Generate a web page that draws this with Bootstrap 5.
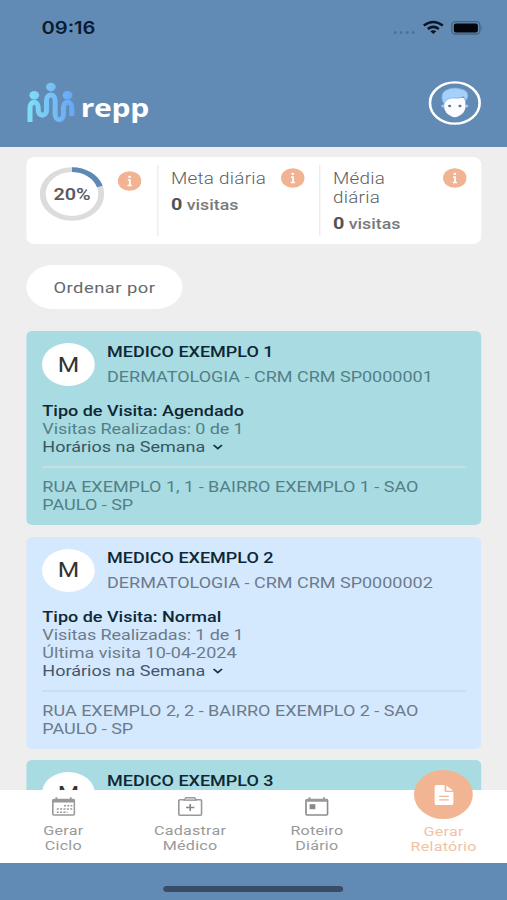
<!DOCTYPE html>
<html lang="pt-BR">
<head>
<meta charset="utf-8">
<meta name="viewport" content="width=device-width, initial-scale=1">
<title>repp</title>
<link href="https://cdn.jsdelivr.net/npm/bootstrap@5.3.0/dist/css/bootstrap.min.css" rel="stylesheet">
<style>
body{margin:0;overflow:hidden;background:#618bb5}
/* The app is laid out 422.5px wide and stretched horizontally to the window */
.app{width:422.5px;height:900px;transform:scaleX(1.2);transform-origin:0 0;font-family:Roboto,"Liberation Sans",sans-serif;font-size:15px;line-height:18px;background:#eee;color:#66696c}
svg{display:block;flex:none}
.top-area{height:147px;background:#618bb5}
.status{height:54px;padding:1px 20.8px 0 34.6px}
.clock{font:600 16.8px/20px Inter,sans-serif;color:#0b1a30}
.brand-row{padding:27px 21.7px 0 21.2px}
.brand-name{font:700 25px/28px "Open Sans",sans-serif;color:#fff;margin-left:4px;padding-top:8px;letter-spacing:-.2px}
.feed{height:643px;padding:10px 21.7px 0 22.3px;overflow:hidden}
.stats{height:87px;border-radius:7px}
.gauge-cell{width:108.5px;padding:10px 12.8px 12px 11px}
.stat-in{border-left:1px solid #e9e9e9;padding:0 11.8px 0 10.7px}
.meta-cell{width:135px}
.stat-label{font-weight:300;font-size:15.7px;line-height:19px;letter-spacing:.22px;color:#5c5f62}
.stat-val{font-size:14.8px;font-weight:500;color:#77797b}
.stat-val b{font-size:16.5px;color:#505356}
.pct{font-size:16.8px}
.info{margin-top:2.5px}
.order{height:44px;width:129.5px;margin:21px 0 22px;padding:2px 0 0;background:#fff;color:#66696c;font-size:15.3px;letter-spacing:.4px}
.doc{border-radius:5px;padding:12px 12.7px 11px 13px;margin-bottom:11.5px}
.teal{background:#a9dbe3;--soft:#537f87;--mid:#35565f;--line:#c4dfe3}
.sky{background:#d5e9fe;--soft:#6c7b8b;--mid:#46566a;--line:#cbdeee}
.avatar{width:43.5px;height:43px;font-size:20.5px;color:#333}
.who{padding-left:10.4px}
.chev{margin-left:6px}
.strong-t{font-weight:500;color:#0d2834}
.soft{color:var(--soft)}
.mid{color:var(--mid)}
.visits{letter-spacing:-.08px}
.rule{height:2px;background:var(--line);margin:10px 0}
.tabs{height:73px;font-size:13.4px;line-height:15px;color:#999;letter-spacing:.2px}
.tab{width:25%}
.tab-icon{margin:7px 0 6.5px}
.peach{color:#f0c3a5}
.fab{width:49px;height:49px;background:#f2b593;margin:-20px 0 4.5px}
.bottom-area{height:37px;background:#618bb5;padding-top:14px}
.home-bar{width:150px;height:6px;background:#3a4b65}
</style>
<script src="https://cdn.jsdelivr.net/npm/bootstrap@5.3.0/dist/js/bootstrap.bundle.min.js"></script>
</head>
<body>
<div class="app d-flex flex-column">
  <header class="top-area flex-shrink-0">
    <div class="status d-flex align-items-center justify-content-between">
      <span class="clock">09:16</span>
      <svg width="76" height="20" viewBox="0 0 91 20" preserveAspectRatio="none">
        <g fill="#4b719b"><circle cx="4" cy="14.500" r="1.500"/><circle cx="10" cy="14.500" r="1.500"/><circle cx="16" cy="14.500" r="1.500"/><circle cx="22" cy="14.500" r="1.500"/></g>
        <g fill="none" stroke="#0a1626" stroke-width="2.600"><path d="M32.500 7.500Q42 0.500 51.500 7.500"/><path d="M36.500 11Q42 6.800 47.500 11"/></g>
        <path d="M39 13.200Q42 11.200 45 13.200L42 16Z" fill="#0a1626"/>
        <rect x="60.500" y="3.700" width="28" height="12.300" rx="3.500" fill="none" stroke="#48627f" stroke-width="1.300"/>
        <rect x="62.500" y="5.400" width="24" height="9" rx="2" fill="#020509"/>
        <path d="M90 8v4q1-.5 1-2t-1-2Z" fill="#48627f"/>
      </svg>
    </div>
    <div class="brand-row d-flex align-items-center justify-content-between">
      <div class="d-flex align-items-center">
        <svg width="42" height="44" viewBox="0 0 50 44" preserveAspectRatio="none">
          <defs><linearGradient id="lg" gradientUnits="userSpaceOnUse" x1="2" y1="0" x2="48" y2="0"><stop offset="0" stop-color="#7fe0f5"/><stop offset=".5" stop-color="#77c2f5"/><stop offset="1" stop-color="#67a6f5"/></linearGradient></defs>
          <g fill="url(#lg)"><ellipse cx="9" cy="14.300" rx="4.800" ry="4.200"/><ellipse cx="25.500" cy="6" rx="4.800" ry="4.200"/><ellipse cx="42" cy="14.300" rx="4.800" ry="4.200"/></g>
          <path d="M4.800 41V26.500C4.800 19.500 12.900 19.500 12.900 26.500V29C12.900 36 21.200 36 21.200 29V19.500C21.200 12 29.700 12 29.700 19.500V33C29.700 40.500 38 40.500 38 33V26.500C38 19.500 46.300 19.500 46.300 26.500V35" fill="none" stroke="url(#lg)" stroke-width="5"/>
        </svg>
        <span class="brand-name">repp</span>
      </div>
      <svg width="44" height="44" viewBox="0 0 44 44">
        <circle cx="22" cy="22" r="20.700" fill="none" stroke="#fff" stroke-width="2.200"/>
        <circle cx="12.300" cy="25" r="1.600" fill="#9dcaf5"/><circle cx="31.700" cy="25" r="1.600" fill="#9dcaf5"/>
        <path d="M13.200 17h17.600v10q-.5 5-5.800 8.300q-3 1.700-6 0q-5.300-3.300-5.800-8.300Z" fill="#fafcff"/>
        <path d="M12.300 21.500Q9.500 13 14 9.700Q20 5.500 27 8Q33.500 9.500 32.800 15.500Q32.500 18.500 30.500 19.500L29.500 15.500Q26 18 21 17Q15.500 16.700 13.600 21.500Z" fill="#a5d0fa" stroke="#80b2e5" stroke-width=".7"/>
        <circle cx="17.700" cy="25" r="1.300" fill="#667585"/><circle cx="26.300" cy="25" r="1.300" fill="#667585"/>
      </svg>
    </div>
  </header>

  <main class="feed flex-shrink-0">
    <section class="stats bg-white d-flex">
      <div class="gauge-cell d-flex justify-content-between">
        <svg width="54" height="54" viewBox="0 0 55 55">
          <circle cx="27.500" cy="27.500" r="24.800" fill="none" stroke="#dcdcdc" stroke-width="5"/>
          <path d="M27.500 2.700A24.800 24.800 0 0 1 51.100 19.900" fill="none" stroke="#5c89b5" stroke-width="5"/>
          <text class="pct" x="27.500" y="33.500" text-anchor="middle" font-weight="600" fill="#5a5c5f">20%</text>
        </svg>
        <svg class="info mt-1" width="20" height="20" viewBox="0 0 20 20"><circle cx="10" cy="10" r="9.800" fill="#f1b391"/><path d="M8.500 9h1.700v5.200M8.300 14.400h3.600" stroke="#fff" stroke-width="1.500" fill="none"/><circle cx="10" cy="5.900" r="1.150" fill="#fff"/></svg>
      </div>
      <div class="meta-cell d-flex">
        <div class="stat-in flex-fill d-flex justify-content-between my-2">
          <div><div class="stat-label mt-1">Meta diária</div><div class="stat-val mt-2"><b>0</b> visitas</div></div>
          <svg class="info" width="20" height="20" viewBox="0 0 20 20"><circle cx="10" cy="10" r="9.800" fill="#f1b391"/><path d="M8.500 9h1.700v5.200M8.300 14.400h3.600" stroke="#fff" stroke-width="1.500" fill="none"/><circle cx="10" cy="5.900" r="1.150" fill="#fff"/></svg>
        </div>
      </div>
      <div class="d-flex flex-fill">
        <div class="stat-in flex-fill d-flex justify-content-between my-2">
          <div><div class="stat-label mt-1">Média<br>diária</div><div class="stat-val mt-2"><b>0</b> visitas</div></div>
          <svg class="info" width="20" height="20" viewBox="0 0 20 20"><circle cx="10" cy="10" r="9.800" fill="#f1b391"/><path d="M8.500 9h1.700v5.200M8.300 14.400h3.600" stroke="#fff" stroke-width="1.500" fill="none"/><circle cx="10" cy="5.900" r="1.150" fill="#fff"/></svg>
        </div>
      </div>
    </section>

    <button class="order btn rounded-pill border-0 d-block">Ordenar por</button>

    <article class="doc teal">
      <div class="d-flex">
        <div class="avatar bg-white rounded-circle d-flex align-items-center justify-content-center flex-shrink-0">M</div>
        <div class="who d-flex flex-column justify-content-between"><div class="strong-t">MEDICO EXEMPLO 1</div><div class="soft">DERMATOLOGIA - CRM CRM SP0000001</div></div>
      </div>
      <div class="mt-3 strong-t">Tipo de Visita: Agendado</div>
      <div class="soft visits">Visitas Realizadas: 0 de 1</div>
      <div class="mid d-flex align-items-center">Horários na Semana <svg class="chev" width="9" height="6" viewBox="0 0 9 6"><path d="M1 1l3.500 3.500L8 1" fill="none" stroke="#173540" stroke-width="1.600"/></svg></div>
      <div class="rule"></div>
      <div class="soft">RUA EXEMPLO 1, 1 - BAIRRO EXEMPLO 1 - SAO<br>PAULO - SP</div>
    </article>

    <article class="doc sky">
      <div class="d-flex">
        <div class="avatar bg-white rounded-circle d-flex align-items-center justify-content-center flex-shrink-0">M</div>
        <div class="who d-flex flex-column justify-content-between"><div class="strong-t">MEDICO EXEMPLO 2</div><div class="soft">DERMATOLOGIA - CRM CRM SP0000002</div></div>
      </div>
      <div class="mt-3 strong-t">Tipo de Visita: Normal</div>
      <div class="soft visits">Visitas Realizadas: 1 de 1</div>
      <div class="soft">Última visita 10-04-2024</div>
      <div class="mid d-flex align-items-center">Horários na Semana <svg class="chev" width="9" height="6" viewBox="0 0 9 6"><path d="M1 1l3.500 3.500L8 1" fill="none" stroke="#173540" stroke-width="1.600"/></svg></div>
      <div class="rule"></div>
      <div class="soft">RUA EXEMPLO 2, 2 - BAIRRO EXEMPLO 2 - SAO<br>PAULO - SP</div>
    </article>

    <article class="doc teal">
      <div class="d-flex">
        <div class="avatar bg-white rounded-circle d-flex align-items-center justify-content-center flex-shrink-0">M</div>
        <div class="who"><div class="strong-t">MEDICO EXEMPLO 3</div></div>
      </div>
    </article>
  </main>

  <nav class="tabs bg-white d-flex flex-shrink-0 text-center">
    <div class="tab d-flex flex-column align-items-center">
      <svg class="tab-icon" width="20" height="19" viewBox="0 0 20 19"><rect x="1" y="2.500" width="18" height="15.500" rx="1" fill="none" stroke="#999" stroke-width="1.300"/><path d="M1 2h18v3.500H1z" fill="#999"/><path d="M4 .3v3M16 .3v3" stroke="#999" stroke-width="1.500"/><path d="M10.300 8.800h7M4.300 12h13M4.300 15.200h9" stroke="#999" stroke-width="1.600" stroke-dasharray="1.700 1.100"/></svg>
      <div>Gerar<br>Ciclo</div>
    </div>
    <div class="tab d-flex flex-column align-items-center">
      <svg class="tab-icon" width="21" height="19" viewBox="0 0 21 19"><rect x="1" y="2.700" width="19" height="15.500" rx="1" fill="none" stroke="#999" stroke-width="1.400"/><path d="M5.500 3.300L6.700.5h7.600l1.200 2.800Z" fill="#ccc" stroke="#999" stroke-width="1"/><path d="M10.500 7v7M7 10.500h7" fill="none" stroke="#888" stroke-width="1.400"/></svg>
      <div>Cadastrar<br>Médico</div>
    </div>
    <div class="tab d-flex flex-column align-items-center">
      <svg class="tab-icon" width="20" height="19" viewBox="0 0 20 19"><rect x="1" y="2.500" width="18" height="15.500" rx="1" fill="none" stroke="#8c8c8c" stroke-width="1.400"/><path d="M1 2h18v2.800H1z" fill="#999"/><path d="M4 .3v3M16 .3v3" stroke="#999" stroke-width="1.500"/><rect x="4" y="7.200" width="4.800" height="5" fill="#888"/></svg>
      <div>Roteiro<br>Diário</div>
    </div>
    <div class="tab d-flex flex-column align-items-center peach">
      <div class="fab rounded-circle d-flex align-items-center justify-content-center"><svg width="16" height="20" viewBox="0 0 16 20"><path d="M2 0H8.500v6q0 1 1 1H16V18q0 2-2 2H2Q0 20 0 18V2Q0 0 2 0Z" fill="#fff"/><path d="M10 .4L15.600 5.700H10Z" fill="#fff"/><path d="M4 11.300h8M4 14.800h8" stroke="#f2b593" stroke-width="1.300"/></svg></div>
      <div>Gerar<br>Relatório</div>
    </div>
  </nav>
  <div class="bottom-area d-flex justify-content-center align-items-center flex-shrink-0"><div class="home-bar rounded-pill"></div></div>
</div>
</body>
</html>
